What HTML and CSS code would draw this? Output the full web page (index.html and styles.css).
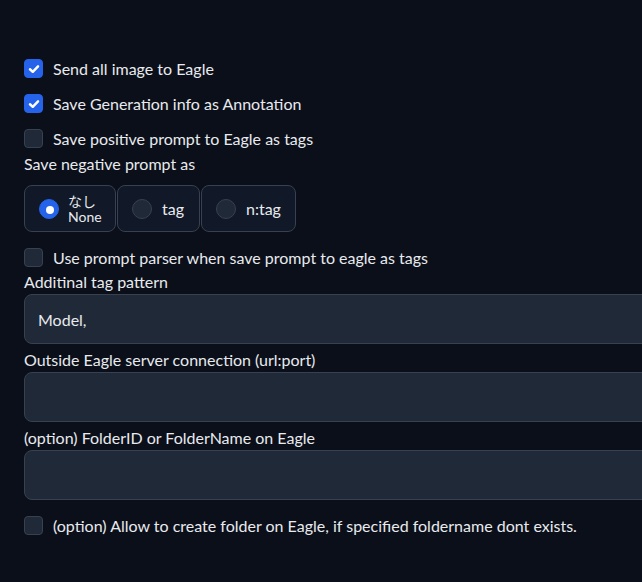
FILE: index.html
```html
<!DOCTYPE html>
<html>
<head>
<meta charset="utf-8">
<link rel="stylesheet" href="styles.css">
</head>
<body>
<div class="form">
  <label class="cb-row"><span class="cb checked"><svg viewBox="0 0 16 16" width="14" height="14"><path d="M3.4 8.3 L6.6 11.2 L12.6 4.9" fill="none" stroke="#fff" stroke-width="2.8" stroke-linecap="round" stroke-linejoin="round"/></svg></span><span class="cb-text">Send all image to Eagle</span></label>
  <label class="cb-row"><span class="cb checked"><svg viewBox="0 0 16 16" width="14" height="14"><path d="M3.4 8.3 L6.6 11.2 L12.6 4.9" fill="none" stroke="#fff" stroke-width="2.8" stroke-linecap="round" stroke-linejoin="round"/></svg></span><span class="cb-text">Save Generation info as Annotation</span></label>
  <label class="cb-row last"><span class="cb"></span><span class="cb-text">Save positive prompt to Eagle as tags</span></label>

  <div class="label neg">Save negative prompt as</div>
  <div class="radios">
    <div class="radio-box first"><span class="radio on"></span><span class="radio-text two"><span class="jp">なし</span><span class="en">None</span></span></div>
    <div class="radio-box second"><span class="radio"></span><span class="radio-text">tag</span></div>
    <div class="radio-box third"><span class="radio"></span><span class="radio-text">n:tag</span></div>
  </div>

  <label class="cb-row parser"><span class="cb"></span><span class="cb-text">Use prompt parser when save prompt to eagle as tags</span></label>

  <div class="label l1">Additinal tag pattern</div>
  <div class="input"><span class="value">Model,</span></div>
  <div class="label l2">Outside Eagle server connection (url:port)</div>
  <div class="input"></div>
  <div class="label l2">(option) FolderID or FolderName on Eagle</div>
  <div class="input"></div>

  <label class="cb-row final"><span class="cb"></span><span class="cb-text">(option) Allow to create folder on Eagle, if specified foldername dont exists.</span></label>
</div>
</body>
</html>
```
FILE: styles.css
```css
html, body {
  margin: 0;
  padding: 0;
  background: #0b0f19;
  overflow: hidden;
  width: 642px;
  height: 582px;
}
body {
  font-family: "Lato", "Noto Sans CJK JP", sans-serif;
  font-size: 16px;
  color: #e8eaee;
}
.form {
  display: flex;
  flex-direction: column;
  padding: 59px 0 0 24px;
  width: 660px;
}
.cb-row {
  display: flex;
  align-items: center;
  height: 19px;
  margin-bottom: 16px;
}
.cb-row.last { margin-bottom: 6px; }
.cb-row.parser { margin-top: 16px; margin-bottom: 5px; }
.cb-row.final { margin-top: 16px; }
.cb {
  width: 19px;
  height: 19px;
  box-sizing: border-box;
  border-radius: 4px;
  background: #1f2937;
  border: 1px solid #374151;
  display: flex;
  align-items: center;
  justify-content: center;
  flex: none;
}
.cb.checked {
  background: #2563eb;
  border-color: #2563eb;
}
.cb-text {
  margin-left: 10px;
  line-height: 20px;
}
.label {
  line-height: 20px;
  height: 20px;
}
.neg { margin-bottom: 11px; }
.l1 { margin-bottom: 2px; }
.l2 { margin-top: 6px; margin-bottom: 2px; }
.radios {
  display: flex;
  gap: 1px;
  height: 47px;
}
.radio-box {
  box-sizing: border-box;
  height: 47px;
  display: flex;
  align-items: center;
  border: 1px solid #374151;
  border-radius: 8px;
  background: #111827;
  padding-left: 14px;
}
.radio-box.first { width: 92px; }
.radio-box.second { width: 83px; }
.radio-box.third { width: 95px; }
.radio {
  width: 20px;
  height: 20px;
  box-sizing: border-box;
  border-radius: 50%;
  border: 1px solid #374151;
  background: #1f2937;
  flex: none;
}
.radio.on {
  background: #2563eb;
  border-color: #2563eb;
  position: relative;
}
.radio.on::after {
  content: "";
  position: absolute;
  left: 6px;
  top: 6px;
  width: 8px;
  height: 8px;
  border-radius: 50%;
  background: #fff;
}
.radio-text {
  margin-left: 10px;
  line-height: 20px;
}
.radio-text.two {
  display: flex;
  flex-direction: column;
  font-size: 14px;
  margin-left: 9px;
}
.radio-text.two .jp { line-height: 15px; font-size: 14px; }
.radio-text.two .en { line-height: 15px; }
.input {
  box-sizing: border-box;
  height: 50px;
  border: 1px solid #374151;
  border-radius: 8px;
  background: #1f2937;
  display: flex;
  align-items: center;
  padding-left: 13px;
}
```
